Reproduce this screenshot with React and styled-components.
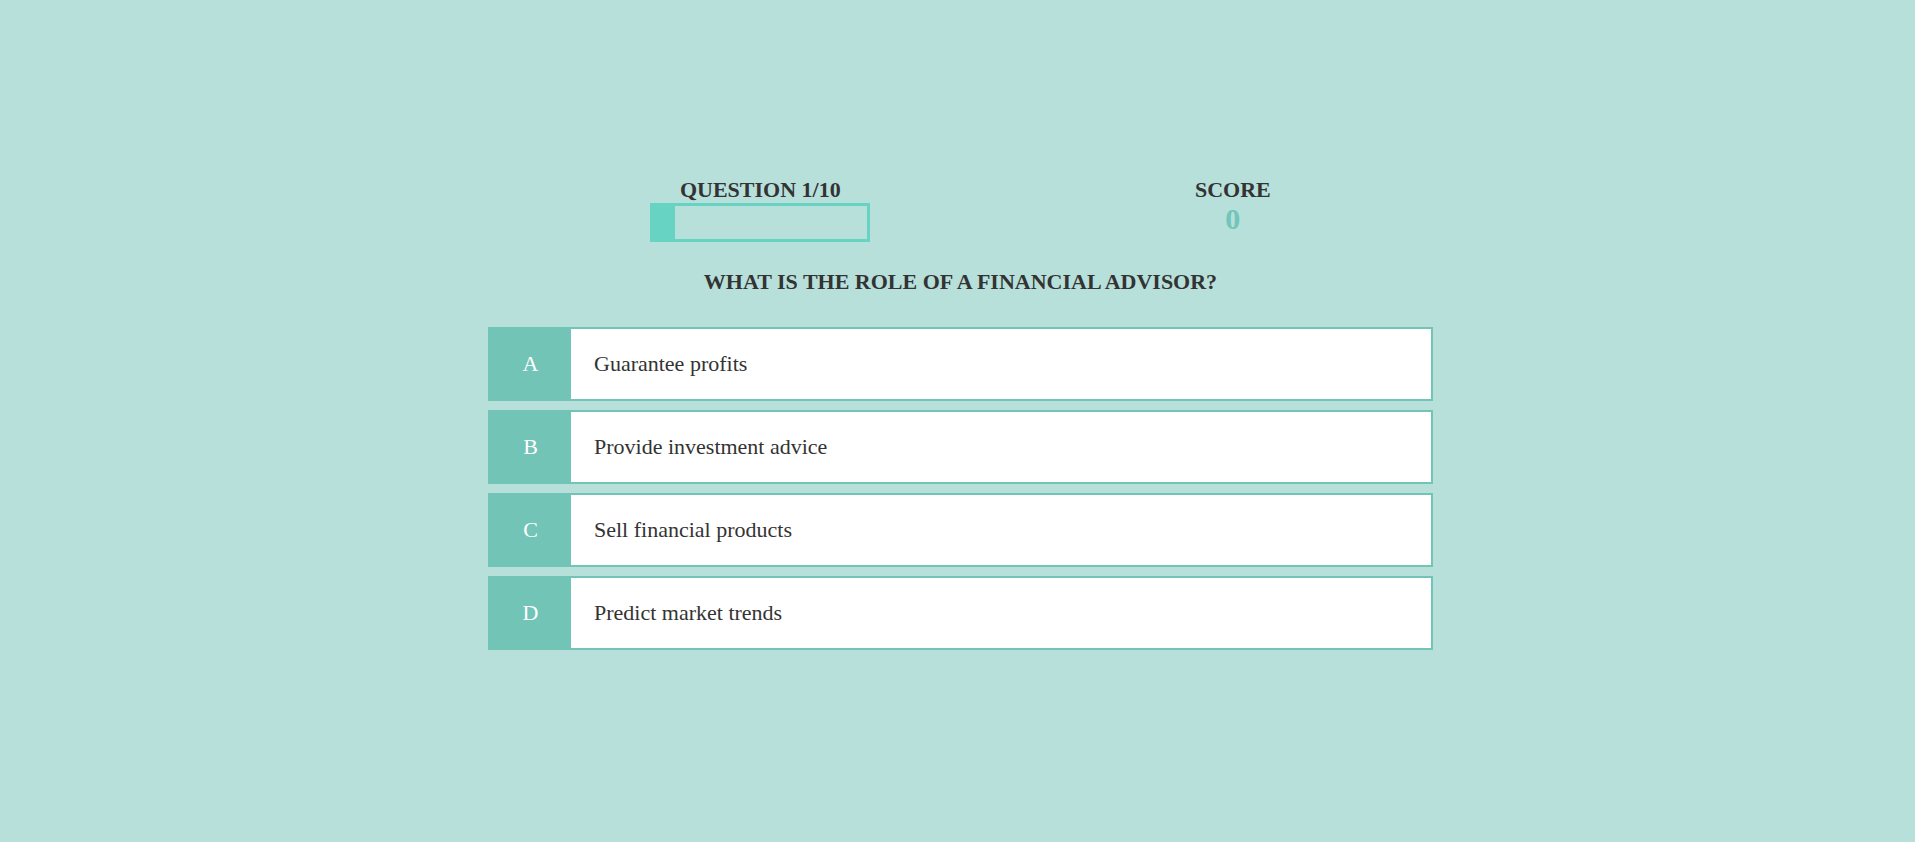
import styled, { createGlobalStyle } from 'styled-components';

const GlobalStyle = createGlobalStyle`
  body {
    margin: 0;
    background: #b7e0db;
    font-family: "Liberation Serif", "Times New Roman", serif;
    color: #333333;
  }
`;

const Page = styled.div`
  min-height: 842px;
  display: flex;
  justify-content: center;
  padding: 177px 0 0 6px;
  box-sizing: border-box;
`;

const Quiz = styled.div`
  width: 945px;
  display: flex;
  flex-direction: column;
`;

const Header = styled.div`
  display: flex;
  justify-content: space-around;
  align-items: flex-start;
`;

const Stat = styled.div`
  display: flex;
  flex-direction: column;
  align-items: center;
`;

const Label = styled.h3`
  margin: 0;
  font-size: 22px;
  font-weight: bold;
  line-height: normal;
`;

const Progress = styled.div`
  width: 220px;
  height: 39px;
  border: 3px solid #66d3c3;
  box-sizing: border-box;
`;

const Fill = styled.div`
  height: 100%;
  background: #66d3c3;
`;

const ScoreValue = styled.span`
  font-size: 30px;
  font-weight: bold;
  color: #72c5b8;
  line-height: 32px;
`;

const QuestionText = styled.h2`
  margin: 27px 0 32px;
  font-size: 22px;
  font-weight: bold;
  text-align: center;
  line-height: normal;
`;

const Options = styled.div`
  display: flex;
  flex-direction: column;
  gap: 9px;
`;

const Option = styled.div`
  display: flex;
  height: 74px;
  border: 2px solid #72c4b7;
  box-sizing: border-box;
  background: #ffffff;
  cursor: pointer;
`;

const Letter = styled.div`
  width: 81px;
  display: flex;
  align-items: center;
  justify-content: center;
  background: #72c4b7;
  color: #ffffff;
  font-size: 22px;
`;

const Answer = styled.div`
  display: flex;
  align-items: center;
  padding-left: 23px;
  font-size: 22px;
  color: #333333;
`;

const answers = [
  { key: 'A', text: 'Guarantee profits' },
  { key: 'B', text: 'Provide investment advice' },
  { key: 'C', text: 'Sell financial products' },
  { key: 'D', text: 'Predict market trends' },
];

export default function App() {
  const current = 1;
  const total = 10;
  const score = 0;

  return (
    <>
      <GlobalStyle />
      <Page>
        <Quiz>
          <Header>
            <Stat>
              <Label>QUESTION {current}/{total}</Label>
              <Progress>
                <Fill style={{ width: `${(current / total) * 100}%` }} />
              </Progress>
            </Stat>
            <Stat>
              <Label>SCORE</Label>
              <ScoreValue>{score}</ScoreValue>
            </Stat>
          </Header>
          <QuestionText>WHAT IS THE ROLE OF A FINANCIAL ADVISOR?</QuestionText>
          <Options>
            {answers.map((a) => (
              <Option key={a.key}>
                <Letter>{a.key}</Letter>
                <Answer>{a.text}</Answer>
              </Option>
            ))}
          </Options>
        </Quiz>
      </Page>
    </>
  );
}
